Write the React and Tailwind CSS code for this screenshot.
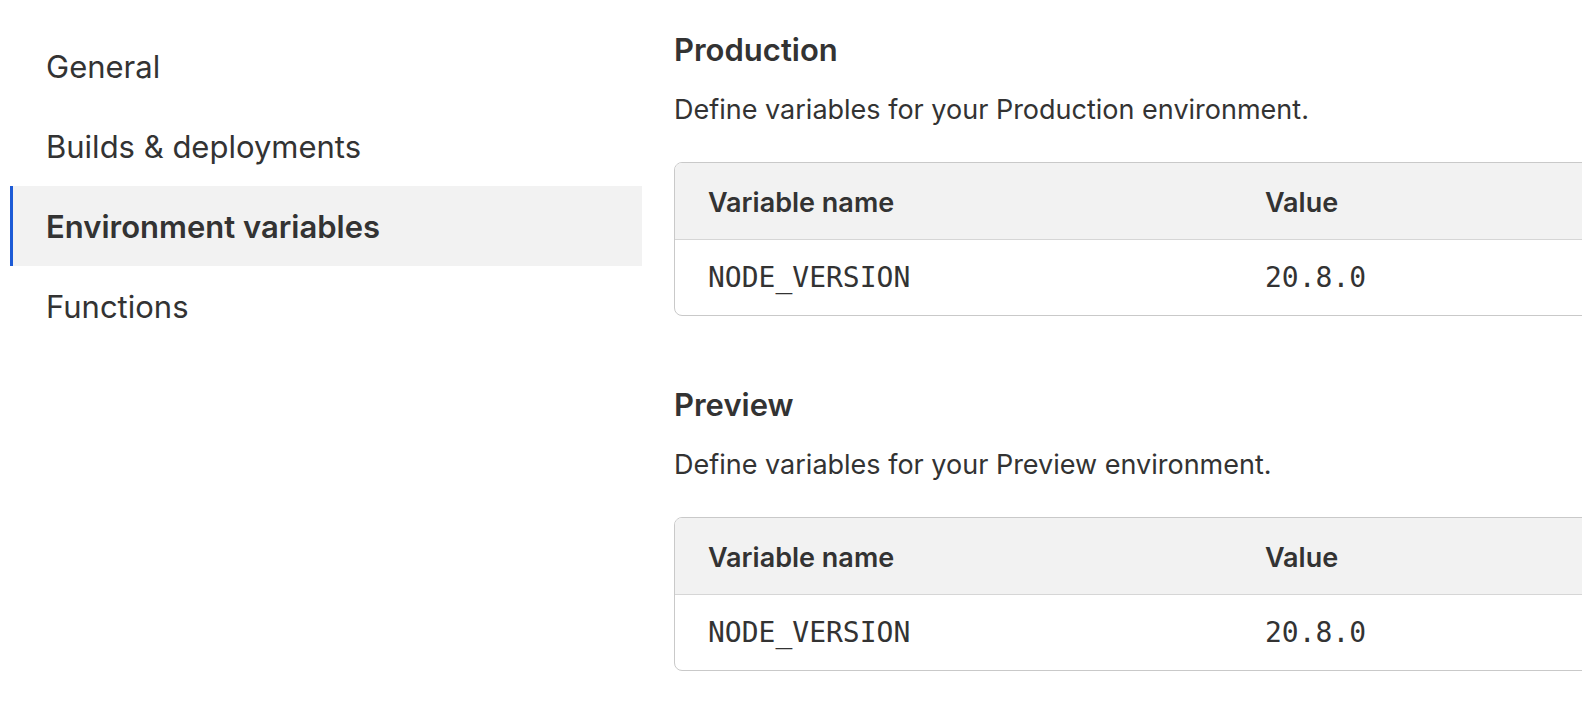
import React from "react";

const navItems = ["General", "Builds & deployments", "Environment variables", "Functions"];

const envs = [
    { name: "Production", vars: [{ key: "NODE_VERSION", value: "20.8.0" }] },
    { name: "Preview", vars: [{ key: "NODE_VERSION", value: "20.8.0" }] },
];

function VarTable({ vars }) {
    return (
        <div className="w-[1000px] border border-[#c9c9c9] rounded-lg overflow-hidden">
            <div className="flex bg-[#f2f2f2] h-[77px] pt-[4px] items-center border-b border-[#d6d6d6] text-[27px] font-semibold text-[#333]">
                <div className="w-[557px] pl-[33px]">Variable name</div>
                <div className="pl-[33px]">Value</div>
            </div>
            {vars.map((v) => (
                <div key={v.key} className="flex h-[75px] items-center text-[28px] leading-[40px] text-[#333] font-['DejaVu_Sans_Mono',monospace]">
                    <div className="w-[557px] pl-[33px]">{v.key}</div>
                    <div className="pl-[33px]">{v.value}</div>
                </div>
            ))}
        </div>
    );
}

export default function App() {
    return (
        <div className="w-[1582px] h-[708px] overflow-hidden bg-white flex font-['Inter',sans-serif] text-[#333]">
            <nav className="w-[642px] pl-[10px] pt-[26px] shrink-0">
                {navItems.map((item) => {
                    const active = item === "Environment variables";
                    return (
                        <div
                            key={item}
                            className={
                                active
                                    ? "h-[80px] flex items-center pt-[3px] pl-[33px] bg-[#f2f2f2] border-l-[3px] border-[#1d5bd6] text-[31px] font-semibold"
                                    : "h-[80px] flex items-center pt-[3px] pl-[36px] text-[31px]"
                            }
                        >
                            {item}
                        </div>
                    );
                })}
            </nav>
            <main className="ml-[32px] pt-[31px] flex flex-col gap-[70px]">
                {envs.map((env) => (
                    <section key={env.name}>
                        <h2 className="text-[31px] font-semibold leading-[38px]">{env.name}</h2>
                        <p className="text-[27px] leading-[34px] mt-[24px] mb-[35px]">
                            Define variables for your {env.name} environment.
                        </p>
                        <VarTable vars={env.vars} />
                    </section>
                ))}
            </main>
        </div>
    );
}
